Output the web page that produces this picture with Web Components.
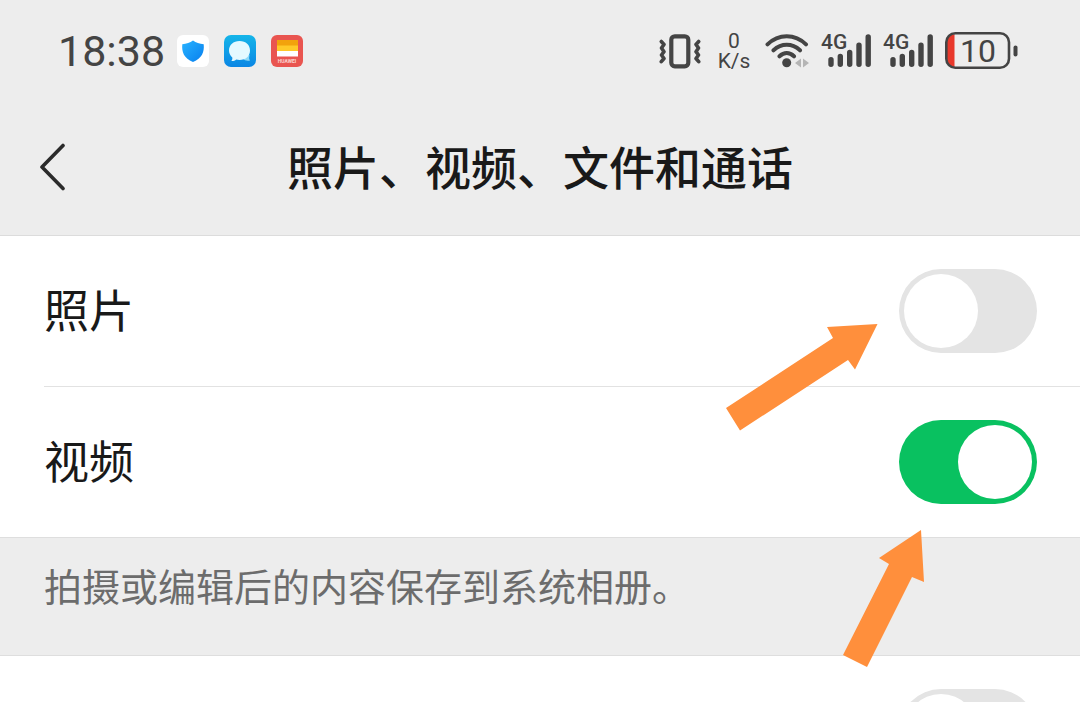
<!DOCTYPE html>
<html lang="zh-CN">
<head>
<meta charset="utf-8">
<meta name="viewport" content="width=device-width, initial-scale=1">
<title>照片、视频、文件和通话</title>
<style>
  body {
    margin: 0;
    background: #fff;
    color: #191919;
    font-family: Roboto, "Noto Sans CJK SC", sans-serif;
  }
</style>
</head>
<body>
<settings-page></settings-page>

<script>
const define = (name, html, setup) => {
  const template = document.createElement('template');
  template.innerHTML = html;
  customElements.define(name, class extends HTMLElement {
    constructor() {
      super();
      this.attachShadow({ mode: 'open' }).append(template.content.cloneNode(true));
    }
    connectedCallback() {
      if (setup) setup(this, this.shadowRoot);
    }
  });
};

define('signal-strength', `
  <style>
    :host { display: block; }
    svg { display: block; }
    text { font: 500 21px Roboto, sans-serif; }
  </style>
  <svg width="50" height="44" viewBox="0 -4 50 44" fill="#444">
    <text x="0" y="16">4G</text>
    <g stroke="#444" stroke-width="5.4" stroke-linecap="round">
      <path d="M10 26.7v4.6M19.3 23.4v7.9M28.7 19.5v11.8M38 12.2v19.1M47.2 4v27.3"/>
    </g>
  </svg>`);

define('battery-level', `
  <style>
    :host { display: block; }
    svg { display: block; }
    text { font: 400 32px Roboto, sans-serif; }
  </style>
  <svg width="73" height="38" viewBox="0 0 73 38">
    <path d="M10 2H9.500V35H10A8 8 0 0 1 2 27V10A8 8 0 0 1 10 2Z" fill="#e8382b"/>
    <rect x="1.300" y="1.300" width="62.700" height="34.400" rx="9" fill="none" stroke="#444" stroke-width="2.600"/>
    <path d="M70.500 15.500v7" stroke="#444" stroke-width="4" stroke-linecap="round"/>
    <text x="33" y="30" text-anchor="middle" fill="#444">10</text>
  </svg>`);

define('network-speed', `
  <style>
    :host { display: block; width: 38px; text-align: center; font-size: 21px; line-height: 20px; }
    span { display: block; }
  </style>
  <span>0</span><span>K/s</span>`);

define('status-bar', `
  <style>
    :host { display: flex; align-items: center; justify-content: space-between;
      height: 102px; box-sizing: border-box; padding: 0 62px 0 58px; color: #444; }
    div { display: flex; align-items: center; }
    .apps { gap: 15px; }
    .system { gap: 12px; }
    .left { gap: 12px; }
    time { font-size: 43px; line-height: 52px; }
    svg { display: block; }
    .brand { font: 700 5px Roboto, sans-serif; }
  </style>
  <div class="left">
    <time>18:38</time>
    <div class="apps">
      <svg width="32" height="32" viewBox="0 0 32 32">
        <defs><linearGradient id="shield" x2="1" y2="1"><stop stop-color="#28b3ff"/><stop offset="1" stop-color="#087fee"/></linearGradient></defs>
        <rect width="32" height="32" rx="6" fill="#fff"/>
        <path d="M16 5.500c3 2.400 6.500 3.300 10.700 3.700.8 8-1.700 13.800-10.700 17.800C7 23 4.500 17.200 5.300 9.200 9.500 8.800 13 7.900 16 5.500Z" fill="url(#shield)"/>
      </svg>
      <svg width="32" height="32" viewBox="0 0 32 32">
        <defs><linearGradient id="chat" x2="0" y2="1"><stop stop-color="#15b5e9"/><stop offset="1" stop-color="#0a86e4"/></linearGradient></defs>
        <rect width="32" height="32" rx="7" fill="url(#chat)"/>
        <path d="M18 23c3 3 5.500 3 8 2.500-1.200-1.500-1-3-.4-5.500Z" fill="#8bd8f7"/>
        <path d="M15.500 6C22 6 26 10 26 15.500S22 25 15.500 25c-1.200 0-2.200-.1-3.200-.4-1.700 1.300-3.300 1.600-5 1.400 1-1.300 1.200-2.300 1-3.600C6.200 20.700 5 18.300 5 15.500 5 10 9.300 6 15.500 6Z" fill="#e4f9ff"/>
      </svg>
      <svg width="32" height="32" viewBox="0 0 32 32">
        <rect width="32" height="32" rx="6" fill="#e95550"/>
        <path fill="#f2a20c" d="M6 5h21v6H6z"/>
        <path fill="#ffc928" d="M6 10.500h21v5.500H6z"/>
        <path fill="#fff" d="M6 16h21v5.500H6z"/>
        <text class="brand" x="16" y="28" text-anchor="middle" fill="#fbd5d2">HUAWEI</text>
      </svg>
    </div>
  </div>
  <div class="system">
    <svg width="44" height="36" viewBox="0 0 44 36" fill="none" stroke="#444" stroke-linecap="round" stroke-linejoin="round">
      <rect x="12.300" y="3.300" width="17" height="30" rx="3.500" stroke-width="4.200"/>
      <path stroke-width="3.600" d="M2.300 8.500 5 11.500 2.500 15 5 18.700 2.500 22 5 25.500 2.300 28.700M39.700 8.500 37 11.500 39.500 15 37 18.700 39.500 22 37 25.500 39.700 28.700"/>
    </svg>
    <network-speed></network-speed>
    <svg width="44" height="36" viewBox="0 0 44 36" fill="none" stroke="#444" stroke-width="4" stroke-linecap="round">
      <path d="M2.500 11.300C13.500.4 30 .4 41 11.300M8.500 17.300c8-7.300 18.500-7.300 26.500 0M14.500 23.300c4.500-4.300 10-4.300 14.500 0"/>
      <circle cx="21.700" cy="29.700" r="4.500" fill="#444" stroke="none"/>
      <path d="M36 25.500v9l-6-4.500ZM38 25.500v9l6-4.500Z" fill="#b5b5b5" stroke="none"/>
    </svg>
    <signal-strength></signal-strength>
    <signal-strength></signal-strength>
    <battery-level></battery-level>
  </div>`);

define('nav-header', `
  <style>
    :host { display: grid; grid-template-columns: 72px 1fr 72px; align-items: center;
      height: 134px; box-sizing: border-box; padding: 0 24px 4px; border-bottom: 1px solid #dcdcdc; }
    button { width: 60px; height: 72px; padding: 0; border: 0; background: none; color: #2b2b2b; }
    svg { display: block; margin-left: 14px; }
    h1 { margin: 0; padding-bottom: 4px; text-align: center; font-size: 46px; line-height: 66px; font-weight: 500; white-space: nowrap;
      font-family: "Noto Sans CJK SC", sans-serif; }
  </style>
  <button type="button" aria-label="返回">
    <svg width="32" height="48" viewBox="0 0 32 48" fill="none" stroke="currentColor" stroke-width="3.600" stroke-linecap="round" stroke-linejoin="round"><path d="M25 2.500 4 24 25 45.500"/></svg>
  </button>
  <h1><slot></slot></h1>`);

define('setting-row', `
  <style>
    :host { display: flex; align-items: center; justify-content: space-between; position: relative;
      height: 150px; margin-left: 44px; padding-right: 43px; }
    :host([divided]) { border-bottom: 1px solid #e2e2e2; }
    label { padding-bottom: 4px; font: 400 45px/66px "Noto Sans CJK SC", sans-serif; }
    input { appearance: none; flex: none; width: 138px; height: 84px; box-sizing: border-box; margin: 0 0 0 auto;
      padding: 5px; border-radius: 42px; background: #e4e4e4; display: flex; }
    input::before { content: ""; width: 74px; height: 74px; border-radius: 50%; background: #fff; }
    input:checked { background: #09c160; justify-content: flex-end; }
  </style>
  <label for="toggle"><slot></slot></label>
  <input id="toggle" type="checkbox" role="switch">
  <slot name="pointer"></slot>`, (host, root) => {
    const input = root.getElementById('toggle');
    input.checked = host.hasAttribute('checked');
    if (host.hasAttribute('label')) input.setAttribute('aria-label', host.getAttribute('label'));
  });

define('setting-note', `
  <style>
    :host { display: block; padding: 20px 44px 43px; background: #ededed; color: #6c6c6c;
      border: solid #dedede; border-width: 1px 0; font: 400 38px/54px "Noto Sans CJK SC", sans-serif; }
  </style>
  <slot></slot>`);

/* Callout arrows lie over the rows and keep their distance from the switch on the right. */
define('callout-arrow', `
  <style>
    :host { position: absolute; z-index: 1; right: 202px; top: 88px; pointer-events: none; }
    :host([direction="up"]) { right: 156px; top: 143px; }
    svg { display: none; }
    :host([direction="up"]) .up, :host([direction="right"]) .right { display: block; }
  </style>
  <svg class="right" width="152" height="107" viewBox="726 324 152 107" fill="#ff8f3c"><path d="M877.500 324 827 327 833 338 726 408 740 430.500 848 360 855 369.500Z"/></svg>
  <svg class="up" width="81" height="137" viewBox="843 530 81 137" fill="#ff8f3c"><path d="M921 530 879 558 889 564 843 655 867 667 912 577 924 582Z"/></svg>`);

define('settings-page', `
  <style>
    :host { display: block; }
    header { background: #ededed; }
  </style>
  <header>
    <status-bar></status-bar>
    <nav-header>照片、视频、文件和通话</nav-header>
  </header>
  <main>
    <setting-row divided>照片<callout-arrow slot="pointer" direction="right"></callout-arrow></setting-row>
    <setting-row checked>视频<callout-arrow slot="pointer" direction="up"></callout-arrow></setting-row>
    <setting-note>拍摄或编辑后的内容保存到系统相册。</setting-note>
    <setting-row label="自动下载"></setting-row>
  </main>`);
</script>
</body>
</html>
